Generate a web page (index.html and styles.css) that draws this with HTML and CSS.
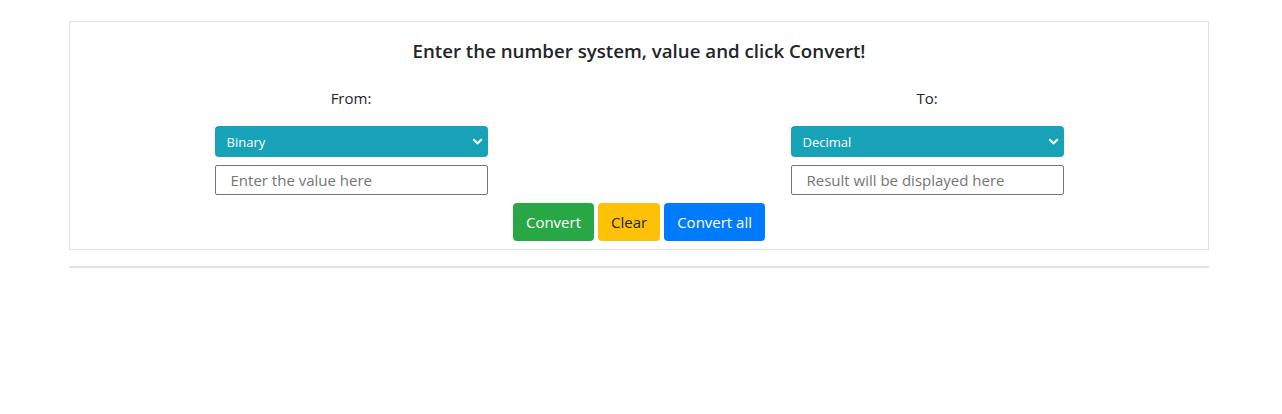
FILE: index.html
```html
<!DOCTYPE html>
<html lang="en">
<head>
<meta charset="utf-8">
<title>Number System Converter</title>
<link rel="stylesheet" href="styles.css">
</head>
<body>
<div class="container">
  <div class="card">
    <h5 class="title">Enter the number system, value and click Convert!</h5>
    <div class="row">
      <div class="col">
        <label class="label">From:</label>
        <div class="select-wrap">
          <select class="select">
            <option>Binary</option>
            <option>Octal</option>
            <option>Decimal</option>
            <option>Hexadecimal</option>
          </select>
          <svg class="chev" width="11" height="7" viewBox="0 0 11 7"><path d="M1.2 1.2 L5.5 5.3 L9.8 1.2" fill="none" stroke="#fff" stroke-width="2.2"/></svg>
        </div>
        <input class="input" type="text" placeholder="Enter the value here">
      </div>
      <div class="col">
        <label class="label">To:</label>
        <div class="select-wrap">
          <select class="select">
            <option>Decimal</option>
            <option>Binary</option>
            <option>Octal</option>
            <option>Hexadecimal</option>
          </select>
          <svg class="chev" width="11" height="7" viewBox="0 0 11 7"><path d="M1.2 1.2 L5.5 5.3 L9.8 1.2" fill="none" stroke="#fff" stroke-width="2.2"/></svg>
        </div>
        <input class="input" type="text" placeholder="Result will be displayed here" readonly>
      </div>
    </div>
    <div class="buttons">
      <button class="btn btn-green">Convert</button>
      <button class="btn btn-yellow">Clear</button>
      <button class="btn btn-blue">Convert all</button>
    </div>
  </div>
  <hr class="rule">
</div>
</body>
</html>
```
FILE: styles.css
```css
* { box-sizing: border-box; }
body {
  margin: 0;
  padding: 21px 4px 0 0;
  font-family: "Open Sans", "Noto Sans", sans-serif;
  color: #212529;
  background: #fff;
}
.container {
  width: 1140px;
  margin: 0 auto;
}
.card {
  border: 1px solid #dee2e6;
  padding: 17px 0 8px;
}
.title {
  margin: 0;
  text-align: center;
  font-size: 18.7px;
  font-weight: 600;
  line-height: 24px;
}
.row {
  display: flex;
  justify-content: center;
  margin-top: 23px;
}
.col {
  flex: 0 0 576px;
  width: 576px;
  padding: 0 15px;
  display: flex;
  flex-direction: column;
  align-items: center;
}
.label {
  font-size: 15px;
  line-height: 24px;
  margin-bottom: 16px;
}
.select-wrap {
  position: relative;
  width: 273px;
  height: 31px;
}
.select {
  appearance: none;
  -webkit-appearance: none;
  width: 100%;
  height: 31px;
  border: none;
  border-radius: 4px;
  background: #17a2b8;
  color: #fff;
  font-family: inherit;
  font-size: 13px;
  padding: 0 24px 0 12px;
  outline: none;
}
.chev {
  position: absolute;
  right: 5px;
  top: 12px;
  pointer-events: none;
}
.input {
  margin-top: 8px;
  width: 273px;
  height: 30px;
  border: 1px solid #767676;
  border-radius: 2px;
  padding: 0 15px;
  font-family: inherit;
  font-size: 15px;
  color: #212529;
  outline: none;
}
.input::placeholder { color: #757575; }
.buttons {
  display: flex;
  justify-content: center;
  gap: 4px;
  margin-top: 8px;
}
.btn {
  height: 38px;
  padding: 0 13px;
  border: none;
  border-radius: 4px;
  font-family: inherit;
  font-size: 15px;
  color: #fff;
  cursor: pointer;
}
.btn-green { background: #28a745; }
.btn-yellow { background: #ffc107; color: #212529; }
.btn-blue { background: #007bff; }
.rule {
  margin: 16px 0 0;
  border: none;
  border-top: 2px solid #dee2e6;
  height: 0;
}
```
